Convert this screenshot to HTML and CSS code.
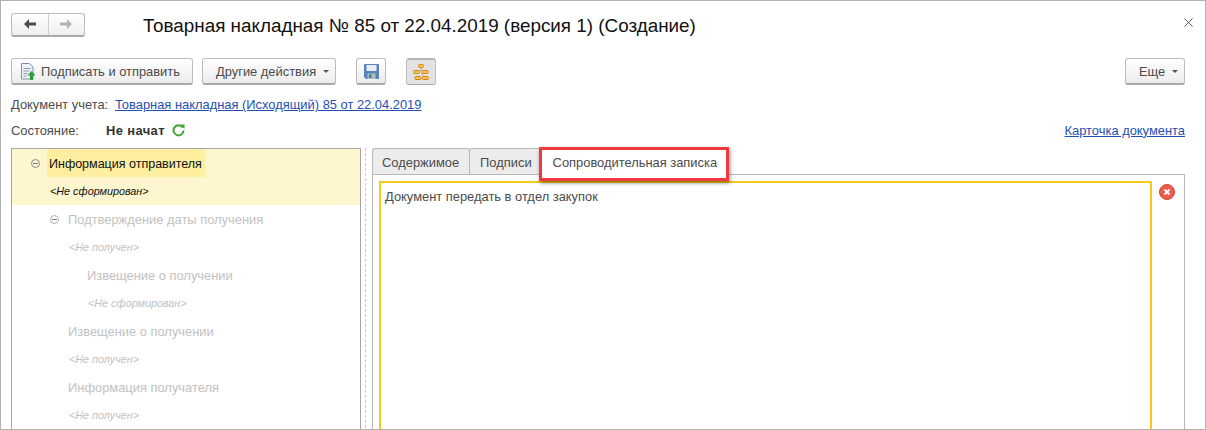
FILE: index.html
```html
<!DOCTYPE html>
<html lang="ru">
<head>
    <meta charset="UTF-8">
    <meta name="viewport" content="width=device-width, initial-scale=1.0">
    <title>Товарная накладная</title>
    <link rel="stylesheet" href="styles.css">
</head>
<body>

    <div class="window">

        <div class="head">
            <div class="nav">
                <span class="nav-btn">
                    <svg width="14" height="12" viewBox="0 0 14 12"><path d="M6 1 1 6l5 5V7.500h7v-3H6z" fill="#4d4d4d"/></svg>
                </span>
                <span class="nav-btn">
                    <svg width="14" height="12" viewBox="0 0 14 12"><path d="M8 1l5 5-5 5V7.500H1v-3h7z" fill="#b4b4b4"/></svg>
                </span>
            </div>
            <h1 class="title">Товарная накладная № 85 от 22.04.2019 (версия 1) (Создание)</h1>
            <svg class="close" width="9" height="9" viewBox="0 0 9 9"><path d="M.5.5l8 8M8.5.5l-8 8" stroke="#555" fill="none"/></svg>
        </div>

        <div class="toolbar">
            <button class="btn btn-send">
                <svg width="16" height="17" viewBox="0 0 16 17">
                    <path d="M1.500.5h8l3.500 3.500v12h-11.500z" fill="#eef1f6" stroke="#7d8fb0"/>
                    <path d="M3.500 5.500h7M3.500 8h6M3.500 10.500h4M3.500 13h3" stroke="#8b9bb8"/>
                    <path d="M11.500 8l4 4.500h-2.500v4.500h-3v-4.500h-2.500z" fill="#2f9e3a"/>
                </svg>
                Подписать и отправить
            </button>
            <button class="btn btn-other">Другие действия<i class="caret"></i></button>
            <button class="btn btn-icon btn-save">
                <svg width="15" height="15" viewBox="0 0 15 15">
                    <path d="M0 1a1 1 0 0 1 1-1h13a1 1 0 0 1 1 1v14H2l-2-2z" fill="#5a84b8"/>
                    <rect x="2.500" y="1" width="10" height="6" fill="#e8eef6"/>
                    <rect x="3.500" y="9.500" width="8" height="5.500" fill="#a9c0b8"/>
                    <rect x="5" y="10.500" width="2.500" height="3.500" fill="#50759f"/>
                </svg>
            </button>
            <button class="btn btn-icon btn-tree">
                <svg width="16" height="16" viewBox="0 0 16 16">
                    <path d="M8 3v3M4 9l4-3 4 3M3 12v2M13 12v2M8 9l3 4" stroke="#b9a06a" fill="none" stroke-width=".7"/>
                    <rect x="5.500" y=".5" width="5" height="3" rx="1" fill="#f6c65c" stroke="#d9820f"/>
                    <rect x=".5" y="6.500" width="6" height="3" rx="1" fill="#f6c65c" stroke="#d9820f"/>
                    <rect x="9" y="6.500" width="6" height="3" rx="1" fill="#f6c65c" stroke="#d9820f"/>
                    <rect x="2" y="12.500" width="6" height="3" rx="1" fill="#f6c65c" stroke="#d9820f"/>
                    <rect x="9.500" y="12.500" width="6" height="3" rx="1" fill="#f6c65c" stroke="#d9820f"/>
                </svg>
            </button>
            <button class="btn btn-more">Еще<i class="caret"></i></button>
        </div>

        <div class="doc-row">
            <span class="doc-label">Документ учета:</span>
            <a class="link" href="#">Товарная накладная (Исходящий) 85 от 22.04.2019</a>
        </div>

        <div class="state-row">
            <span class="state-label">Состояние:</span>
            <b class="state-value">Не начат</b>
            <svg width="13" height="13" viewBox="0 0 13 13">
                <path d="M10.600 3.500A5 5 0 1 0 11.500 6.500" stroke="#3fa535" stroke-width="2" fill="none"/>
                <path d="M8 0.500l4.500 0v4.500z" fill="#3fa535"/>
            </svg>
            <a class="link card-link" href="#">Карточка документа</a>
        </div>

        <div class="main">
            <div class="tree">
                <div class="current">
                    <div class="tree-row lvl-0">
                        <i class="toggle"></i>
                        <span class="name selected">Информация отправителя</span>
                    </div>
                    <div class="tree-row lvl-0 sub">&lt;Не сформирован&gt;</div>
                </div>
                <div class="pending">
                    <div class="tree-row lvl-1"><i class="toggle"></i><span class="name">Подтверждение даты получения</span></div>
                    <div class="tree-row lvl-1 sub">&lt;Не получен&gt;</div>
                    <div class="tree-row lvl-2"><span class="name">Извещение о получении</span></div>
                    <div class="tree-row lvl-2 sub">&lt;Не сформирован&gt;</div>
                    <div class="tree-row lvl-1 leaf"><span class="name">Извещение о получении</span></div>
                    <div class="tree-row lvl-1 sub">&lt;Не получен&gt;</div>
                    <div class="tree-row lvl-1 leaf"><span class="name">Информация получателя</span></div>
                    <div class="tree-row lvl-1 sub">&lt;Не получен&gt;</div>
                </div>
            </div>

            <div class="splitter"></div>

            <div class="content">
                <div class="tabs">
                    <div class="tab">Содержимое</div>
                    <div class="tab">Подписи</div>
                    <div class="tab active">Сопроводительная записка<span class="mark"></span></div>
                </div>
                <div class="tab-page">
                    <div class="note">Документ передать в отдел закупок</div>
                    <svg class="clear" width="16" height="16" viewBox="0 0 16 16">
                        <circle cx="8" cy="8" r="7.500" fill="#ee5a4c" stroke="#c9463c"/>
                        <path d="M5.500 5.500l5 5M10.500 5.500l-5 5" stroke="#fff" stroke-width="2"/>
                    </svg>
                </div>
            </div>
        </div>

    </div>

</body>
</html>
```

FILE: styles.css
```css
* {
    box-sizing: border-box;
}

body {
    margin: 0;
    font-family: 'Liberation Sans', Arial, sans-serif;
    font-size: 12.9px;
    color: #4b4b4b;
    background-color: #fff;
}

.window {
    height: 430px;
    padding: 11px 20px 0 10px;
    border: 1px solid #b2b2b2;
    overflow: hidden;
}

.head {
    display: flex;
    align-items: center;
    height: 25px;
}

.nav {
    display: flex;
    width: 74px;
    height: 24px;
    border: 1px solid #bdbdbd;
    border-bottom: 2px solid #a9a9a9;
    border-radius: 3px;
    background: linear-gradient(#fff, #eeeeee);
}

.nav-btn {
    display: flex;
    flex: 1;
    align-items: center;
    justify-content: center;
}

.nav-btn + .nav-btn {
    border-left: 1px solid #d0d0d0;
}

.title {
    margin: 3px 0 0 58px;
    font-size: 18.85px;
    font-weight: normal;
    color: #111;
}

.close {
    margin-left: auto;
    margin-right: -8px;
    margin-top: -4px;
}

.toolbar {
    display: flex;
    margin-top: 21px;
}

.btn {
    display: flex;
    align-items: center;
    height: 27px;
    padding: 0;
    font-family: inherit;
    font-size: 12.9px;
    color: #4b4b4b;
    border: 1px solid #bdbdbd;
    border-bottom: 2px solid #a9a9a9;
    border-radius: 3px;
    background: linear-gradient(#fff, #ececec);
}

.btn-send {
    width: 182px;
    padding-left: 8px;
    gap: 5px;
}

.btn-other {
    width: 134px;
    margin-left: 9px;
    padding-left: 13px;
}

.btn-icon {
    width: 30px;
    justify-content: center;
}

.btn-save {
    margin-left: 20px;
}

.btn-tree {
    margin-left: 20px;
    background: #e2e2e2;
    border-bottom-width: 1px;
    border-top: 2px solid #b5b5b5;
}

.btn-more {
    width: 60px;
    margin-left: auto;
    padding-left: 13px;
}

.caret {
    width: 0;
    height: 0;
    margin-left: 7px;
    border: 3px solid transparent;
    border-top: 3px solid #555;
    border-bottom: 0;
}

.doc-row {
    display: flex;
    height: 15px;
    margin-top: 12px;
    line-height: 15px;
}

.doc-label {
    width: 104px;
}

.link {
    color: #1f4fb4;
    text-decoration: underline;
}

.state-row {
    display: flex;
    align-items: center;
    height: 16px;
    margin-top: 10px;
}

.state-label {
    width: 95px;
}

.state-value {
    margin-right: 7px;
    color: #333;
    letter-spacing: 0.4px;
}

.card-link {
    margin-left: auto;
}

.main {
    display: flex;
    margin-top: 10px;
    height: 290px;
}

.tree {
    flex: none;
    width: 350px;
    height: 100%;
    border: 1px solid #a6a6a6;
}

.current {
    background-color: #fdf6cf;
}

.tree-row {
    display: flex;
    align-items: center;
    height: 28px;
    color: #111;
}

.lvl-0 {
    padding-left: 19px;
}

.lvl-1 {
    padding-left: 38px;
}

.lvl-2 {
    padding-left: 75px;
}

.lvl-0.sub {
    padding-left: 38px;
}

.lvl-1.leaf {
    padding-left: 56px;
}

.lvl-1.sub {
    padding-left: 57px;
}

.lvl-2.sub {
    padding-left: 76px;
}

.sub {
    font-size: 10.8px;
    font-style: italic;
}

.pending .tree-row {
    color: #c2c2c2;
}

.toggle {
    position: relative;
    flex: none;
    width: 9px;
    height: 9px;
    margin-right: 7px;
    border: 1px solid #8a8a8a;
    border-radius: 50%;
}

.toggle::after {
    content: "";
    position: absolute;
    left: 1px;
    top: 3px;
    width: 5px;
    height: 1px;
    background-color: #777;
}

.pending .toggle {
    margin-right: 9px;
    border-color: #b0b0b0;
}

.selected {
    display: flex;
    align-items: center;
    align-self: stretch;
    padding: 1px 3px 0 2px;
    font-size: 12.5px;
    background-color: #fdeea0;
}

.splitter {
    flex: none;
    width: 10px;
    margin: 0 0 0 4px;
    border-left: 1px dashed #c8c8c8;
}

.content {
    flex: 1;
    min-width: 0;
    margin-left: -3px;
}

.tabs {
    display: flex;
    height: 26px;
}

.tab {
    position: relative;
    padding: 6px 10px 0 9px;
    color: #4b4b4b;
    background-color: #ececec;
    border: 1px solid #b8b8b8;
    border-bottom: 0;
    border-radius: 3px 3px 0 0;
}

.tab + .tab {
    margin-left: -1px;
    padding: 6px 10px 0;
}

.tab.active {
    height: 27px;
    margin-left: -3px;
    padding: 6px 10px 0 12px;
    background-color: #fff;
    z-index: 1;
}

.mark {
    position: absolute;
    left: -2px;
    top: -2px;
    right: -2px;
    bottom: -6px;
    border: 3px solid #f0393f;
    box-shadow: 1px 2px 4px rgba(0, 0, 0, 0.45);
}

.tab-page {
    display: flex;
    height: 264px;
    padding: 6px 10px 0 6px;
    border: 1px solid #b8b8b8;
}

.note {
    flex: none;
    width: 773px;
    padding: 6px 4px;
    border: 2px solid #f8c81c;
    color: #4b4b4b;
}

.clear {
    flex: none;
    margin: 3px 0 0 7px;
}
```
